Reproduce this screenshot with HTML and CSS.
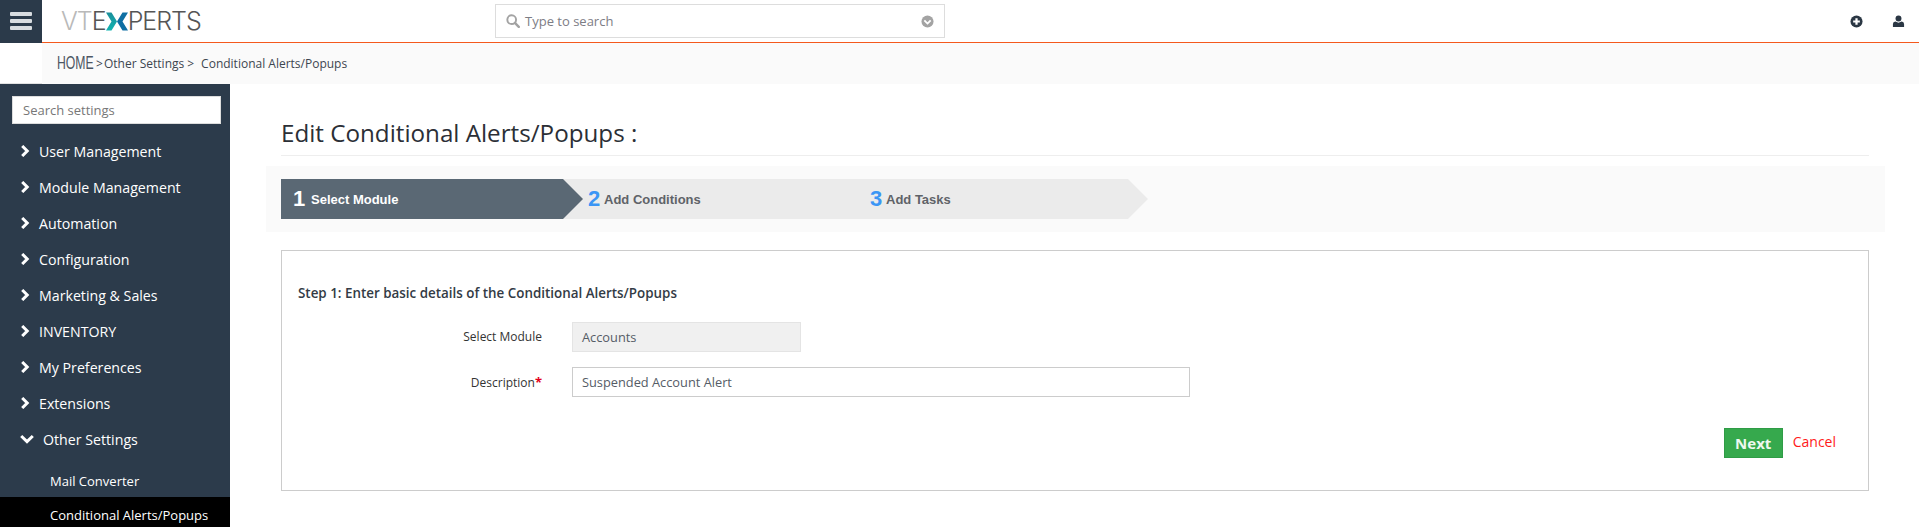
FILE: index.html
```html
<!DOCTYPE html>
<html lang="en">
<head>
<meta charset="utf-8">
<title>Edit Conditional Alerts/Popups</title>
<link rel="stylesheet" href="styles.css">
</head>
<body>
<header class="topbar">
  <button class="menu-btn" aria-label="Menu">
    <span class="bar"></span><span class="bar"></span><span class="bar"></span>
  </button>
  <div class="logo"><span class="logo-light">VT</span><span class="logo-dark">E</span><svg class="logo-x" viewBox="0 0 22 18" role="img" aria-label="X"><defs><linearGradient id="teal" x1="0" y1="0" x2="0" y2="1"><stop offset="0" stop-color="#1a8f9b"/><stop offset="1" stop-color="#12b3b0"/></linearGradient></defs><polygon fill="url(#teal)" points="0,0 5.5,0 11,9 5.5,18 0,18 5.5,9"/><polygon fill="#0f6fa3" points="22,0 16.5,0 11,9 16.5,18 22,18 16.5,9"/></svg><span class="logo-dark">PERTS</span></div>
  <div class="global-search">
    <svg class="search-icon" viewBox="0 0 16 16"><circle cx="6.5" cy="6.5" r="5" fill="none" stroke="#a3a3a3" stroke-width="2.2"/><path d="M10.2 10.2 L14.6 14.6" stroke="#a3a3a3" stroke-width="2.8" stroke-linecap="round"/></svg>
    <span class="search-text">Type to search</span>
    <svg class="search-caret" viewBox="0 0 14 14"><circle cx="7" cy="7" r="6.5" fill="#a3a3a3"/><path d="M3.6 5.8 L7 9.2 L10.4 5.8" fill="none" stroke="#fff" stroke-width="2"/></svg>
  </div>
  <div class="top-actions">
    <svg class="top-icon" viewBox="0 0 14 14"><circle cx="7" cy="7" r="6.5" fill="#2b3744"/><path d="M7 3.4 V10.6 M3.4 7 H10.6" stroke="#fff" stroke-width="2.4"/></svg>
    <svg class="top-icon" viewBox="0 0 14 14"><circle cx="7" cy="3.8" r="3.2" fill="#2b3744"/><path d="M1 13 V9.8 Q1 7.4 3.6 7 L7 8.4 L10.4 7 Q13 7.4 13 9.8 V13 Z" fill="#2b3744"/></svg>
  </div>
</header>

<div class="crumb-row">
  <div class="crumb-spacer"></div>
  <nav class="crumbs"><span class="crumb-home">HOME</span><span class="crumb-sep">&gt;</span><span>Other Settings</span><span class="crumb-sep2">&gt;</span><span>Conditional Alerts/Popups</span></nav>
</div>

<div class="page">
  <aside class="sidebar">
    <div class="side-search-wrap"><div class="side-search">Search settings</div></div>
    <ul class="side-menu">
      <li class="side-item"><svg class="chev" viewBox="0 0 10 12"><path d="M2.2 1 L7.2 6 L2.2 11" fill="none" stroke="#fff" stroke-width="3"/></svg>User Management</li>
      <li class="side-item"><svg class="chev" viewBox="0 0 10 12"><path d="M2.2 1 L7.2 6 L2.2 11" fill="none" stroke="#fff" stroke-width="3"/></svg>Module Management</li>
      <li class="side-item"><svg class="chev" viewBox="0 0 10 12"><path d="M2.2 1 L7.2 6 L2.2 11" fill="none" stroke="#fff" stroke-width="3"/></svg>Automation</li>
      <li class="side-item"><svg class="chev" viewBox="0 0 10 12"><path d="M2.2 1 L7.2 6 L2.2 11" fill="none" stroke="#fff" stroke-width="3"/></svg>Configuration</li>
      <li class="side-item"><svg class="chev" viewBox="0 0 10 12"><path d="M2.2 1 L7.2 6 L2.2 11" fill="none" stroke="#fff" stroke-width="3"/></svg>Marketing &amp; Sales</li>
      <li class="side-item"><svg class="chev" viewBox="0 0 10 12"><path d="M2.2 1 L7.2 6 L2.2 11" fill="none" stroke="#fff" stroke-width="3"/></svg>INVENTORY</li>
      <li class="side-item"><svg class="chev" viewBox="0 0 10 12"><path d="M2.2 1 L7.2 6 L2.2 11" fill="none" stroke="#fff" stroke-width="3"/></svg>My Preferences</li>
      <li class="side-item"><svg class="chev" viewBox="0 0 10 12"><path d="M2.2 1 L7.2 6 L2.2 11" fill="none" stroke="#fff" stroke-width="3"/></svg>Extensions</li>
      <li class="side-item side-open"><svg class="chev-down" viewBox="0 0 14 10"><path d="M1.2 2 L7 7.6 L12.8 2" fill="none" stroke="#fff" stroke-width="3"/></svg>Other Settings</li>
      <li class="side-sub side-mail">Mail Converter</li>
      <li class="side-sub side-active">Conditional Alerts/Popups</li>
    </ul>
  </aside>

  <main class="content">
    <h1 class="title">Edit Conditional Alerts/Popups :</h1>
    <div class="steps-wrap">
      <ol class="steps">
        <li class="step step-active"><span class="step-num">1</span><span class="step-label">Select Module</span></li>
        <li class="step"><span class="step-num">2</span><span class="step-label">Add Conditions</span></li>
        <li class="step"><span class="step-num">3</span><span class="step-label">Add Tasks</span></li>
      </ol>
    </div>
    <section class="card">
      <h2 class="card-title">Step 1: Enter basic details of the Conditional Alerts/Popups</h2>
      <div class="form-row form-row-first">
        <div class="form-label">Select Module</div>
        <div class="field field-readonly">Accounts</div>
      </div>
      <div class="form-row">
        <div class="form-label">Description<span class="req">*</span></div>
        <div class="field field-text">Suspended Account Alert</div>
      </div>
      <div class="actions">
        <button class="btn-next">Next</button>
        <a class="cancel">Cancel</a>
      </div>
    </section>
  </main>
</div>
</body>
</html>
```

FILE: styles.css
```css
* { box-sizing: border-box; }
html, body { margin: 0; padding: 0; height: 527px; overflow: hidden; background: #fff; }
body { font-family: "Open Sans", "Noto Sans", sans-serif; font-size: 13px; color: #2b3744; }
ul, ol { list-style: none; margin: 0; padding: 0; }

.topbar { display: flex; align-items: center; height: 43px; background: #fff; border-bottom: 1px solid #f4591d; }
.menu-btn { display: flex; flex-direction: column; justify-content: center; gap: 3px; width: 42px; height: 43px; margin-bottom: -1px; padding: 0 10px 1px; background: #2b3a4a; border: 0; flex: none; }
.bar { display: block; height: 4px; background: #d8dce0; border-radius: 1px; }
.logo { display: flex; align-items: center; width: 435px; padding-left: 18px; margin-left: 1px; font-family: "Inter", "Lato", sans-serif; font-size: 25px; font-weight: 300; letter-spacing: -1px; line-height: 1; flex: none; }
.logo-light { color: #b9b9b9; }
.logo-dark { color: #555; }
.logo-x { width: 22px; height: 19px; flex: none; }
.global-search { display: flex; align-items: center; width: 450px; height: 34px; margin-left: 17px; padding: 0 10px; border: 1px solid #ddd; flex: none; }
.search-icon { width: 14px; height: 14px; flex: none; }
.search-text { flex: 1; margin-left: 5px; font-size: 13px; color: #7d7d85; }
.search-caret { width: 13px; height: 13px; flex: none; }
.top-actions { display: flex; align-items: center; gap: 29px; margin-left: auto; padding-right: 14px; }
.top-icon { width: 13px; height: 13px; display: block; }

.crumb-row { display: flex; height: 41px; }
.crumb-spacer { width: 42px; flex: none; border-bottom: 1px solid #e2e2e2; }
.crumbs { display: flex; flex: 1; align-items: center; height: 41px; padding-left: 15px; background: #fafafa; font-size: 12px; color: #3d4650; }
.crumb-home { display: block; width: 39px; font-family: "Liberation Sans", sans-serif; font-size: 18px; color: #4d5663; transform: scaleX(0.68); transform-origin: left center; white-space: nowrap; }
.crumb-sep { width: 8px; }
.crumb-sep2 { margin: 0 7px 0 3px; }

.page { display: flex; height: 443px; }
.sidebar { width: 230px; height: 443px; background: #2c3b4b; flex: none; overflow: hidden; }
.side-search-wrap { padding: 12px 9px 0 12px; }
.side-search { height: 28px; line-height: 26px; padding-left: 10px; background: #fff; border: 1px solid #ddd; font-size: 13px; color: #777; }
.side-menu { margin-top: 9px; }
.side-item { display: flex; align-items: center; height: 36px; padding-left: 20px; font-size: 14.2px; color: #fff; }
.chev { width: 10px; height: 12px; margin-right: 9px; flex: none; }
.chev-down { width: 14px; height: 10px; margin-right: 9px; flex: none; }
.side-open { margin-bottom: 5px; }
.side-sub { display: flex; align-items: center; height: 35px; padding-left: 50px; font-size: 13px; color: #fff; }
.side-mail { padding-top: 2px; }
.side-active { height: 30px; padding-top: 5px; background: #000; }

.content { flex: 1; padding: 0 50px 0 36px; min-width: 0; }
.title { margin: 0 0 0 15px; height: 72px; padding-top: 32px; border-bottom: 1px solid #eee; font-size: 24.2px; font-weight: 400; line-height: 33px; color: #2b2f36; white-space: nowrap; }
.steps-wrap { height: 66px; margin-top: 10px; margin-right: -16px; padding: 13px 15px; background: #fafafa; }
.steps { display: flex; height: 40px; }
.step { position: relative; display: flex; align-items: center; width: 282px; height: 40px; padding-left: 25px; background: #ebebeb; font-family: "Liberation Sans", Arial, sans-serif; font-weight: 700; font-size: 13px; color: #5f6368; }
.step:last-child { width: 283px; }
.step::after { content: ""; position: absolute; z-index: 1; right: -20px; top: 0; border-left: 20px solid #ebebeb; border-top: 20px solid transparent; border-bottom: 20px solid transparent; }
.step:nth-child(2)::before { content: ""; position: absolute; right: -21px; top: 0; border-left: 20px solid #f3f3f3; border-top: 20px solid transparent; border-bottom: 20px solid transparent; }
.step-active { padding-left: 12px; background: #5a6874; color: #fff; z-index: 2; }
.step-active::after { border-left-color: #5a6874; }
.step-num { width: 16px; font-size: 22px; color: #3b96f5; line-height: 1; font-weight: 700; }
.step-active .step-num { width: 18px; color: #fff; }

.card { height: 241px; margin: 18px 0 0 15px; padding: 33px 12px 0 16px; border: 1px solid #ccc; }
.card-title { margin: 0; font-size: 13.4px; line-height: 18px; font-weight: 600; color: #333b45; }
.form-row { display: flex; align-items: center; height: 30px; margin-top: 15px; }
.form-row-first { margin-top: 20px; }
.form-label { width: 244px; text-align: right; font-size: 12px; font-weight: 500; color: #333; padding-bottom: 1px; }
.req { color: #e3001b; font-weight: 700; font-size: 13px; }
.field { height: 30px; margin-left: 30px; padding-left: 9px; line-height: 28px; font-size: 12.8px; color: #555c66; }
.field-readonly { width: 229px; background: #f0f0f0; border: 1px solid #e4e4e4; }
.field-text { width: 618px; border: 1px solid #ccc; }
.actions { display: flex; align-items: flex-start; justify-content: flex-end; gap: 10px; margin-top: 31px; padding-right: 20px; }
.btn-next { width: 59px; height: 30px; padding: 0; background: #36a94d; border: 1px solid #2f9c46; color: #eef8f0; font-family: "Open Sans", sans-serif; font-size: 15px; font-weight: 700; }
.cancel { font-size: 14px; line-height: 27px; color: #ff1a1a; }
```
